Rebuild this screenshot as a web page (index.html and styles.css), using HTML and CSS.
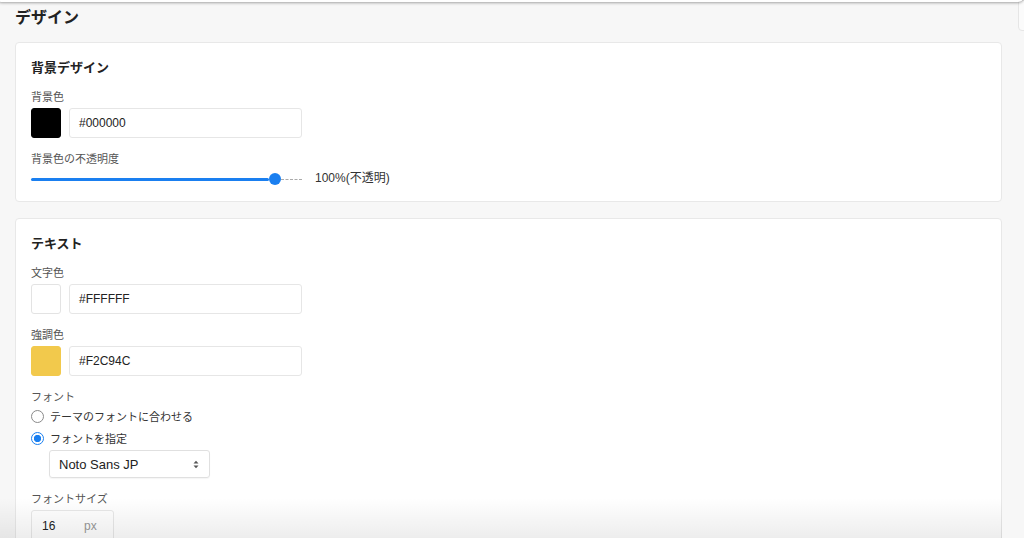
FILE: index.html
```html
<!DOCTYPE html>
<html lang="ja">
<head>
<meta charset="utf-8">
<link rel="stylesheet" href="styles.css">
</head>
<body>
<div class="topbar"></div>
<div class="sidetab"></div>
<main class="page">
  <h1 class="heading">デザイン</h1>

  <section class="card">
    <h2 class="card-title">背景デザイン</h2>
    <div class="field">
      <div class="label">背景色</div>
      <div class="color-row">
        <span class="swatch swatch-black"></span>
        <div class="text-input">#000000</div>
      </div>
    </div>
    <div class="field">
      <div class="label">背景色の不透明度</div>
      <div class="slider-row">
        <div class="slider">
          <div class="slider-fill"></div>
          <div class="slider-thumb"></div>
          <div class="slider-rest"></div>
        </div>
        <span class="slider-value">100%(不透明)</span>
      </div>
    </div>
  </section>

  <section class="card">
    <h2 class="card-title">テキスト</h2>
    <div class="field">
      <div class="label">文字色</div>
      <div class="color-row">
        <span class="swatch swatch-white"></span>
        <div class="text-input">#FFFFFF</div>
      </div>
    </div>
    <div class="field">
      <div class="label">強調色</div>
      <div class="color-row">
        <span class="swatch swatch-yellow"></span>
        <div class="text-input">#F2C94C</div>
      </div>
    </div>
    <div class="field">
      <div class="label label-tight">フォント</div>
      <div class="radio-row"><span class="radio"></span><span class="radio-text">テーマのフォントに合わせる</span></div>
      <div class="radio-row"><span class="radio radio-on"></span><span class="radio-text">フォントを指定</span></div>
      <div class="select">
        <span>Noto Sans JP</span>
        <svg class="select-arrows" width="6" height="9" viewBox="0 0 6 9"><path d="M0.5 3.5 L3 0.8 L5.5 3.5 Z M0.5 5.5 L3 8.2 L5.5 5.5 Z" fill="#555"/></svg>
      </div>
    </div>
    <div class="field">
      <div class="label">フォントサイズ</div>
      <div class="size-input"><span class="size-num">16</span><span class="size-unit">px</span></div>
    </div>
  </section>
</main>
<div class="bottom-fade"></div>
</body>
</html>
```

FILE: styles.css
```css
* { box-sizing: border-box; }
html, body { margin: 0; padding: 0; }
body {
  background: #f7f7f7;
  font-family: "Liberation Sans", "Noto Sans CJK JP", sans-serif;
  color: #222;
  width: 1024px;
  height: 538px;
  overflow: hidden;
  position: relative;
}
.topbar {
  position: absolute;
  left: -4px;
  right: 0;
  top: -30px;
  height: 32px;
  background: #fff;
  border-radius: 0 0 6px 6px;
  box-shadow: 0 1px 3px rgba(0,0,0,0.35);
  z-index: 5;
}
.sidetab {
  position: absolute;
  left: 1018px;
  top: 0;
  width: 12px;
  height: 31px;
  background: #fbfbfb;
  border: 1px solid #e6e6e6;
  border-radius: 0 0 0 4px;
}
.page {
  padding: 8px 22px 0 15px;
}
.heading {
  margin: 0 0 14px 0;
  font-size: 16px;
  line-height: 20px;
  font-weight: 600;
  color: #222;
}
.card {
  background: #fff;
  border: 1px solid #e8e8e8;
  border-radius: 4px;
  padding: 16px 15px 13px 15px;
  margin-bottom: 16px;
}
.card-title {
  margin: 0 0 12px 0;
  font-size: 13px;
  line-height: 18px;
  font-weight: 700;
  color: #222;
}
.field { margin-bottom: 13px; }
.field:last-child { margin-bottom: 0; }
.label {
  font-size: 11px;
  line-height: 16px;
  color: #555;
  margin-bottom: 3px;
}
.label-tight { margin-bottom: 0; }
.color-row {
  display: flex;
  gap: 8px;
  align-items: center;
}
.swatch {
  width: 30px;
  height: 30px;
  border-radius: 3px;
  display: block;
  border: 1px solid #e3e3e3;
}
.swatch-black { background: #000; border-color: #000; }
.swatch-white { background: #fff; }
.swatch-yellow { background: #f2c94c; border-color: #f2c94c; }
.text-input {
  width: 233px;
  height: 30px;
  border: 1px solid #e6e6e6;
  border-radius: 3px;
  padding: 0 9px;
  display: flex;
  align-items: center;
  font-size: 12px;
  color: #222;
}
.slider-row {
  display: flex;
  align-items: center;
  height: 18px;
  margin-top: 1px;
}
.slider {
  width: 271px;
  height: 14px;
  display: flex;
  align-items: center;
}
.slider-fill {
  width: 238px;
  height: 3px;
  background: #1a7ff0;
  border-radius: 2px;
}
.slider-thumb {
  width: 12px;
  height: 12px;
  border-radius: 50%;
  background: #1a7ff0;
  flex: none;
}
.slider-rest {
  flex: 1;
  height: 0;
  border-top: 1px dashed #aaa;
}
.slider-value {
  margin-left: 13px;
  margin-bottom: 3px;
  font-size: 12px;
  line-height: 14px;
  color: #333;
}
.radio-row {
  display: flex;
  align-items: center;
  height: 22px;
}
.radio {
  width: 13px;
  height: 13px;
  border-radius: 50%;
  border: 1px solid #8a8a8a;
  background: #fff;
  margin-right: 6px;
  flex: none;
}
.radio-on {
  border: 1px solid #1a7ff0;
  background: radial-gradient(circle, #1a7ff0 0 3.4px, #fff 3.9px);
}
.radio-text {
  font-size: 11px;
  color: #333;
}
.select {
  margin-left: 18px;
  margin-top: 1px;
  width: 161px;
  height: 28px;
  border: 1px solid #e0e0e0;
  border-radius: 3px;
  padding: 0 10px 0 9px;
  display: flex;
  align-items: center;
  justify-content: space-between;
  font-size: 13px;
  color: #222;
  box-shadow: 0 1px 1px rgba(0,0,0,0.04);
}
.select-arrows { display: block; }
.size-input {
  width: 83px;
  height: 32px;
  border: 1px solid #e8e8e8;
  border-radius: 3px;
  display: flex;
  align-items: center;
  padding-left: 10px;
  font-size: 12px;
}
.size-num { width: 42px; color: #222; }
.size-unit { color: #999; }
.bottom-fade {
  position: absolute;
  left: 0;
  right: 22px;
  bottom: 0;
  height: 40px;
  background: linear-gradient(to bottom, rgba(0,0,0,0), rgba(0,0,0,0.07));
  pointer-events: none;
}
```
